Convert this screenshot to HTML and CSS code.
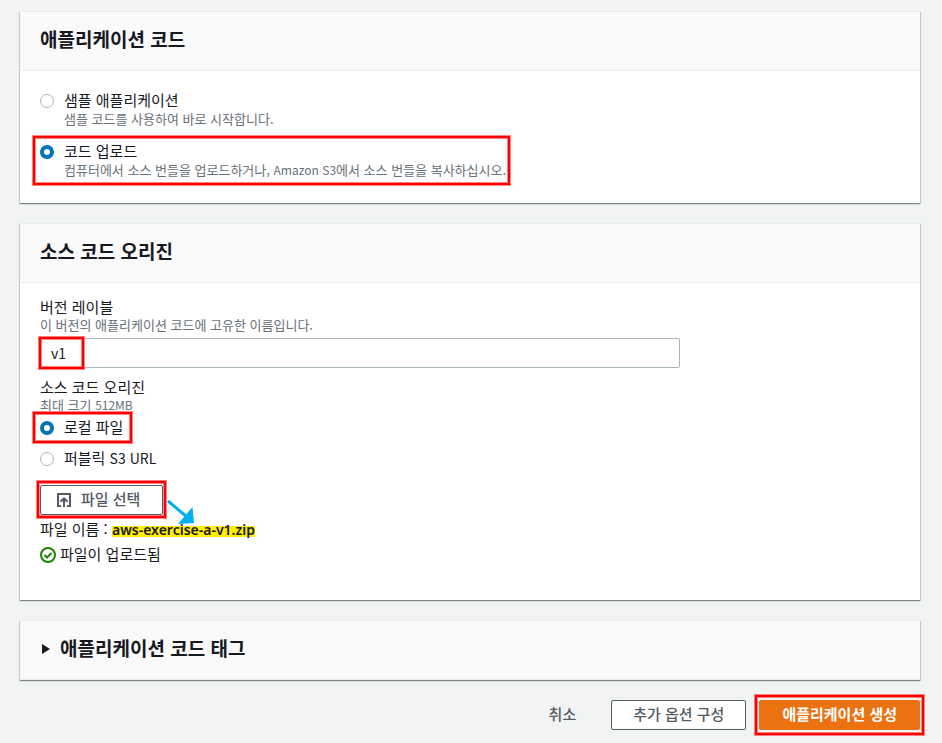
FILE: index.html
```html
<!DOCTYPE html>
<html lang="ko">
<head>
<meta charset="utf-8">
<meta name="viewport" content="width=device-width, initial-scale=1">
<title>애플리케이션 생성</title>
<link rel="stylesheet" href="styles.css">
</head>
<body>
<form class="page">
  <section class="card">
    <header class="card-header"><h2>애플리케이션 코드</h2></header>
    <div class="card-body code-options">
      <div class="option">
        <input type="radio" name="code" id="code-sample">
        <label for="code-sample">샘플 애플리케이션<small>샘플 코드를 사용하여 바로 시작합니다.</small></label>
      </div>
      <div class="option marked mark-option">
        <input type="radio" name="code" id="code-upload" checked>
        <label for="code-upload">코드 업로드<small>컴퓨터에서 소스 번들을 업로드하거나, <span class="latin">Amazon S3</span>에서 소스 번들을 복사하십시오.</small></label>
      </div>
    </div>
  </section>

  <section class="card">
    <header class="card-header"><h2>소스 코드 오리진</h2></header>
    <div class="card-body origin">
      <label class="field-label" for="version">버전 레이블<small>이 버전의 애플리케이션 코드에 고유한 이름입니다.</small></label>
      <div class="text-field marked mark-input"><input type="text" id="version" value="v1"></div>

      <fieldset class="origin-options">
        <legend class="field-label">소스 코드 오리진<small>최대 크기 <span class="latin">512MB</span></small></legend>
        <div class="option marked mark-local">
          <input type="radio" name="origin" id="origin-local" checked>
          <label for="origin-local">로컬 파일</label>
        </div>
        <div class="option">
          <input type="radio" name="origin" id="origin-s3">
          <label for="origin-s3">퍼블릭 <span class="latin">S3 URL</span></label>
        </div>
      </fieldset>

      <div class="upload marked mark-upload">
        <button type="button" class="button">
          <svg class="upload-icon" width="16" height="16" viewBox="0 0 16 16" aria-hidden="true">
            <path d="M5 14H2V2h12v12h-3M8 15V7M4.500 9.800 8 6.300l3.500 3.500"/>
          </svg>파일 선택</button>
        <svg class="arrow" width="30" height="28" viewBox="0 0 30 28" aria-hidden="true">
          <path d="M1 2 20 18" stroke="#00b0f0" stroke-width="3"/>
          <path d="M27 24 11 25 25.500 8Z" fill="#00b0f0"/>
        </svg>
      </div>
      <p class="file-name">파일 이름 : <strong>aws-exercise-a-v1.zip</strong></p>
      <p class="status">
        <svg width="16" height="16" viewBox="0 0 16 16" aria-hidden="true">
          <circle cx="8" cy="8" r="7"/><path d="m4.500 8 2.500 2.500 4.500-4.500"/>
        </svg>파일이 업로드됨</p>
    </div>
  </section>

  <section class="card">
    <header class="card-header collapsed">
      <h2><svg width="10" height="12" viewBox="0 0 10 12" aria-hidden="true"><path d="M2 2v10L10 7Z"/></svg>애플리케이션 코드 태그</h2>
    </header>
  </section>

  <footer class="actions">
    <button type="button" class="button link">취소</button>
    <button type="button" class="button">추가 옵션 구성</button>
    <div class="marked mark-create"><button type="button" class="button primary">애플리케이션 생성</button></div>
  </footer>
</form>
</body>
</html>
```
FILE: styles.css
```css
*,
*::after {
  box-sizing: border-box;
}

body {
  margin: 0;
  background: #f2f3f3;
  color: #16191f;
  font: 15px/20px "Noto Sans CJK KR", "Noto Sans", sans-serif;
}

.page {
  display: flex;
  flex-direction: column;
  gap: 20px;
  padding: 11px 22px 13px 20px;
}

.card {
  background: #fff;
  border-top: 1px solid #eaeded;
  box-shadow: 0 1px 1px 0 rgba(0, 28, 36, .3), 1px 1px 1px 0 rgba(0, 28, 36, .15), -1px 1px 1px 0 rgba(0, 28, 36, .15);
}

.card-header {
  padding: 16px 20px 20px;
  background: #fafafa;
  border-bottom: 1px solid #eaeded;
}

h2 {
  display: flex;
  align-items: center;
  gap: 10px;
  margin: 0;
  font-size: 19px;
  line-height: 22px;
  font-weight: 700;
}

h2 svg {
  fill: #16191f;
}

.card-body {
  padding: 20px 20px 25px;
}

.code-options {
  display: flex;
  flex-direction: column;
  gap: 15px;
}

.option {
  display: flex;
  align-items: flex-start;
  gap: 10px;
  line-height: 18px;
}

.option small {
  margin-top: 2px;
}

input[type="radio"] {
  appearance: none;
  flex: none;
  width: 14px;
  height: 14px;
  margin: 3px 0;
  border: 1px solid #aab7b8;
  border-radius: 50%;
  background: #fff;
}

input[type="radio"]:checked {
  border: 4px solid #0073bb;
}

small {
  display: block;
  color: #687078;
  font-size: 13px;
  line-height: 16px;
}

.latin {
  font-size: 14px;
  line-height: 1;
}

small .latin {
  font-size: 12px;
}

.origin {
  padding: 14px 20px 35px;
}

.field-label {
  display: block;
  padding: 0;
}

.text-field {
  max-width: 640px;
  margin-top: 5px;
}

.text-field input {
  display: block;
  width: 100%;
  height: 30px;
  padding: 0 10px;
  border: 1px solid #aab7b8;
  border-radius: 2px;
  color: #16191f;
  font: inherit;
  font-size: 14px;
}

.origin-options {
  margin: 9px 0 0;
  padding: 0;
  border: 0;
}

.origin-options .option {
  margin-top: 5px;
}

.origin-options .option + .option {
  margin-top: 11px;
}

.button {
  display: flex;
  align-items: center;
  height: 30px;
  padding: 0 21px 2px;
  border: 1px solid #545b64;
  border-radius: 2px;
  background: #fff;
  color: #545b64;
  font: inherit;
  font-weight: 500;
}

.upload {
  width: fit-content;
  margin-top: 16px;
}

.upload .button {
  padding: 0 22px 2px 15px;
}

.upload-icon {
  margin-top: 2px;
  margin-right: 9px;
  fill: none;
  stroke: #545b64;
  stroke-width: 2;
}

.arrow {
  position: absolute;
  top: 14px;
  left: 127px;
  fill: none;
}

p {
  margin: 5px 0 0;
  padding-bottom: 2px;
  line-height: 18px;
}

.file-name strong {
  font-family: "Noto Sans", sans-serif;
  font-size: 14px;
  font-weight: 600;
  line-height: 1;
  background: linear-gradient(#fe0, #fe0) 0 70% / 100% 11px no-repeat;
}

.status {
  display: flex;
  align-items: flex-start;
  gap: 4px;
}

.status svg {
  margin-top: 2px;
  fill: none;
  stroke: #1d8102;
  stroke-width: 2;
}

.actions {
  display: flex;
  justify-content: flex-end;
  gap: 13px;
}

.link {
  border-color: transparent;
  background: transparent;
}

.primary {
  padding: 0 22px 2px;
  border-color: #ec7211;
  background: #ec7211;
  color: #fff;
  font-weight: 700;
}

/* Red highlight frames drawn over the parts of the form */
.marked {
  position: relative;
}

.marked::after {
  content: "";
  position: absolute;
  border: 2px solid #f00;
  box-shadow: 0 0 0 1px #ff8080, inset 0 0 0 1px #ff8080;
  pointer-events: none;
}

.mark-option {
  width: fit-content;
}

.mark-option::after {
  inset: -6px -4px -7px -7px;
}

.mark-input::after {
  inset: -1px auto -1px -1px;
  width: 45px;
}

.mark-local {
  width: fit-content;
}

.mark-local::after {
  inset: -6px -9px -5px -7px;
}

.mark-upload::after {
  inset: -4px -3px -3px;
}

.mark-create::after {
  inset: -5px -4px;
}
```
